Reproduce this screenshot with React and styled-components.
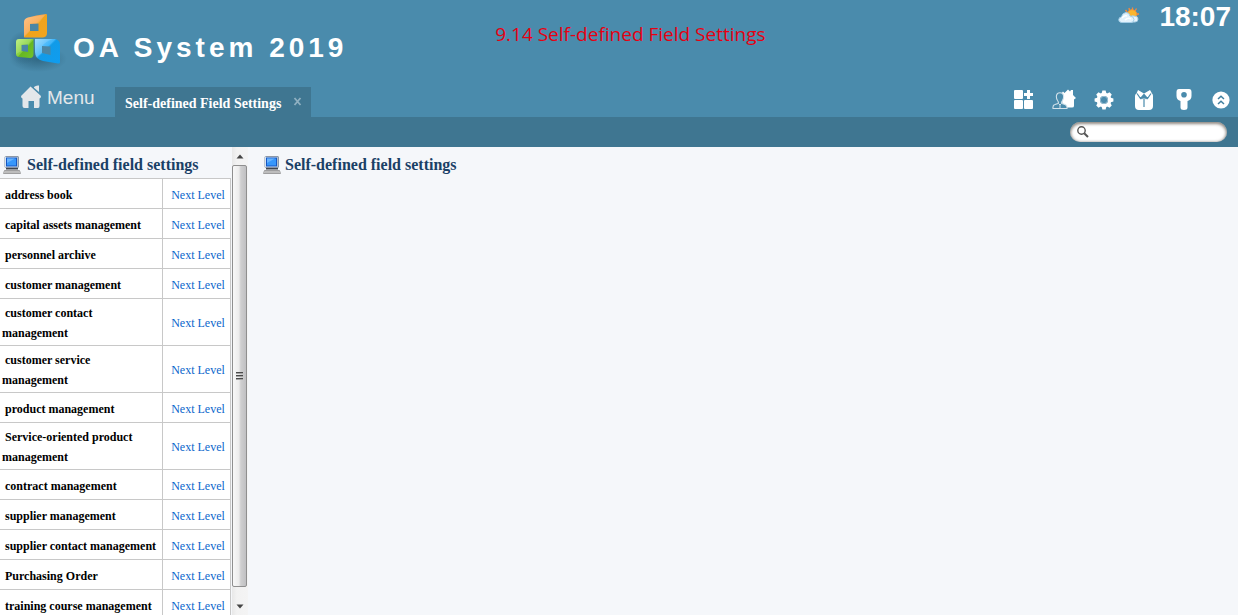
import React from "react";
import styled, { createGlobalStyle } from "styled-components";

const GlobalStyle = createGlobalStyle`
  * { box-sizing: border-box; }
  html, body, #root { height: 100%; }
  body {
    margin: 0;
    overflow: hidden;
    background: #f5f7fa;
    font-family: "Liberation Serif", "Times New Roman", serif;
  }
  button { border: 0; padding: 0; background: none; cursor: pointer; font: inherit; color: inherit; }
  svg { display: block; }
`;

const Page = styled.div`
  display: flex;
  flex-direction: column;
  height: 100vh;
`;

const Header = styled.header`
  background: #4a8bac;
  color: #fff;
`;

const TopRow = styled.div`
  display: grid;
  grid-template-columns: 40% 1fr auto;
  height: 80px;
`;

const Brand = styled.div`
  display: flex;
  padding: 8px 0 0 8px;
  gap: 5px;
`;

const BrandName = styled.h1`
  margin: 0;
  padding-top: 22px;
  font: bold 28px/36px "Liberation Sans", Arial, sans-serif;
  letter-spacing: 4px;
  white-space: nowrap;
`;

const Caption = styled.div`
  padding-top: 20px;
  color: #e60012;
  font: 19px/28px "Open Sans", "Noto Sans", sans-serif;
  white-space: nowrap;
`;

const Status = styled.div`
  display: flex;
  align-items: flex-start;
  gap: 20px;
  padding: 0 7px 0 0;
`;

const WeatherSlot = styled.div`
  padding-top: 7px;
`;

const Clock = styled.time`
  font: bold 28px/34px "Liberation Sans", Arial, sans-serif;
`;

const NavRow = styled.nav`
  display: flex;
  align-items: flex-end;
  height: 37px;
`;

const MenuButton = styled.button`
  display: flex;
  align-items: flex-end;
  gap: 5px;
  height: 37px;
  width: 115px;
  padding-left: 21px;
  padding-bottom: 8px;
  color: #e3e7ea;
  font: 19px/22px "Liberation Sans", Arial, sans-serif;
`;

const Tab = styled.div`
  display: flex;
  align-items: center;
  gap: 12px;
  height: 30px;
  padding: 3px 9px 0 10px;
  background: #3f7691;
`;

const TabLabel = styled.span`
  font-weight: bold;
  font-size: 14px;
  line-height: 20px;
  white-space: nowrap;
`;

const TabClose = styled.button`
  padding-bottom: 4px;
`;

const Tools = styled.div`
  display: flex;
  margin-left: auto;
`;

const Tool = styled.button`
  display: flex;
  align-items: center;
  justify-content: center;
  width: ${(p) => (p.$narrow ? 34 : 40)}px;
  height: 35px;
`;

const SubBar = styled.div`
  display: flex;
  align-items: center;
  justify-content: flex-end;
  height: 30px;
  padding-right: 11px;
  background: #3f7691;
`;

const SearchBox = styled.label`
  display: flex;
  align-items: center;
  width: 157px;
  height: 20px;
  padding-left: 7px;
  gap: 4px;
  border-radius: 10px;
  background: #fff;
  box-shadow: inset 0 1px 3px 1px rgba(70, 60, 50, 0.6);
`;

const SearchInput = styled.input`
  flex: 1;
  min-width: 0;
  height: 16px;
  border: 0;
  padding: 0 8px 0 0;
  outline: 0;
  background: transparent;
  font: 12px "Liberation Sans", Arial, sans-serif;
`;

const Body = styled.div`
  display: flex;
  flex: 1;
  min-height: 0;
`;

const Sidebar = styled.aside`
  display: flex;
  gap: 1px;
  width: 248px;
`;

const ListPane = styled.div`
  flex: 1;
  overflow: hidden;
`;

const Heading = styled.h2`
  display: flex;
  align-items: center;
  gap: ${(p) => (p.$main ? 4 : 6)}px;
  height: 31px;
  margin: 0;
  padding: 5px 0 0 ${(p) => (p.$main ? 15 : 3)}px;
  color: #1a4066;
  font-size: 16px;
  line-height: 20px;
  white-space: nowrap;
`;

const FieldTable = styled.table`
  width: 100%;
  border-collapse: separate;
  border-spacing: 0;
  border-top: 1px solid #c8c8c8;
  background: #fff;
  font-size: 12px;
  line-height: 20px;
`;

const NameCell = styled.th`
  height: 30px;
  padding: 4px 4px 2px 2px;
  border-right: 1px solid #c8c8c8;
  border-bottom: 1px solid #c8c8c8;
  color: #000;
  text-align: left;
  text-indent: 3px;
`;

const LinkCell = styled.td`
  width: 68px;
  padding: 4px 2px 2px 5px;
  border-right: 1px solid #c8c8c8;
  border-bottom: 1px solid #c8c8c8;
  text-align: center;
  white-space: nowrap;
`;

const NextLink = styled.a`
  color: #0a66cc;
  text-decoration: none;
`;

const ScrollRail = styled.div`
  display: flex;
  flex-direction: column;
  width: 16px;
  background: linear-gradient(90deg, #e8e8e8, #f2f2f2 30%, #f4f4f4);
`;

const ScrollArrow = styled.button`
  display: flex;
  align-items: center;
  justify-content: center;
  height: 18px;
`;

const ScrollThumb = styled.div`
  display: flex;
  flex: 1;
  flex-direction: column;
  align-items: center;
  justify-content: center;
  gap: 1px;
  margin-right: 1px;
  margin-bottom: 10px;
  border: 1px solid #8f8f8f;
  border-radius: 2px;
  background: linear-gradient(90deg, #f8f8f8, #ececec 45%, #cfcfd0 60%, #c0c0c2);
`;

const Grip = styled.span`
  width: 7px;
  height: 2px;
  border-top: 1px solid #4a4a4a;
  background: #a5a5a5;
`;

const Main = styled.main`
  flex: 1;
`;

const Logo = () => (
  <svg width="60" height="66" viewBox="8 8 60 66" aria-hidden="true">
    <defs>
      <linearGradient id="orange" x1="0" y1="0" x2="1" y2="1">
        <stop offset="0" stopColor="#ffb878" />
        <stop offset="0.45" stopColor="#f9a547" />
        <stop offset="0.5" stopColor="#f0a31c" />
        <stop offset="1" stopColor="#f2a51f" />
      </linearGradient>
      <linearGradient id="green" x1="0" y1="0" x2="1" y2="1">
        <stop offset="0" stopColor="#b5ee72" />
        <stop offset="0.5" stopColor="#84cf3c" />
        <stop offset="0.54" stopColor="#66b722" />
        <stop offset="1" stopColor="#72c32c" />
      </linearGradient>
      <linearGradient id="blue" x1="0" y1="0" x2="1" y2="1">
        <stop offset="0" stopColor="#8fd6ff" />
        <stop offset="0.4" stopColor="#3fb5fa" />
        <stop offset="0.45" stopColor="#119be8" />
        <stop offset="1" stopColor="#0f9df0" />
      </linearGradient>
      <radialGradient id="shade">
        <stop offset="0" stopColor="#24566f" stopOpacity="0.65" />
        <stop offset="1" stopColor="#24566f" stopOpacity="0" />
      </radialGradient>
    </defs>
    <ellipse cx="38" cy="59" rx="29" ry="13" fill="url(#shade)" />
    <ellipse cx="23" cy="48" rx="15" ry="17" fill="url(#shade)" />
    <path fill="#4a86a5" d="M29 22H40V32H29ZM21 44H29V53H21ZM41 45H51V56H41Z" />
    <path fill="url(#orange)" fillRule="evenodd" d="M24 37V22Q24 18.500 28 17.500Q36 15 46 14Q47 14 47 15V33Q47 37 43 37.500H25Q24 37.500 24 37ZM30 24V31H38.500V23.500Z" />
    <path fill="url(#green)" fillRule="evenodd" d="M16 42Q16 39 19 39H33.500V54Q33.500 58 30 58L19 57Q16 56.500 16 54ZM21.500 45V51L28 52V44.500Z" />
    <path fill="url(#blue)" fillRule="evenodd" d="M35 39H55Q60 40 60 45V62Q60 64 58 63.500L43 61Q35 59 35 52ZM42 46V53L50.500 55V46.500Z" />
    <path fill="#fff" opacity="0.14" d="M24 37V22Q24 18.500 28 17.500L45 15L38.500 23.500H30V31ZM16 54V42Q16 39 19 39H32L28 44.500H21.500V51ZM35 52V39H53Q46 41 42 46V53Q37 56 36 58Z" />
  </svg>
);

const Weather = () => (
  <svg width="21" height="17" viewBox="0 0 21 17" aria-hidden="true">
    <path d="M9 5L7.500 3M11.500 3.500L11 1M14.500 3V0.500M17 4L18.500 1.500M18.500 7H21M18 10L20 11" stroke="#f58a3a" strokeWidth="1.300" />
    <circle cx="14" cy="7.500" r="4.800" fill="#fbb62e" stroke="#f2933a" />
    <path d="M11 15Q9 12 12 10.500Q13 8 16 9Q20 9 20 12Q20 15 17 15Z" fill="#e7f3fb" stroke="#a9cee4" />
    <path d="M3.500 15.500Q0.500 15 0.800 12.500Q1 10 3.500 10Q4 6 8 5.500Q11.500 5.500 12 9Q16 9.500 16 12.500Q16 15.500 13 15.500Z" fill="#e2f2fc" stroke="#a3cde6" />
    <path d="M4 11Q6 8 9 9M7 13Q10 10 13 12" fill="none" stroke="#fff" strokeWidth="1.500" />
  </svg>
);

const Home = () => (
  <svg width="21" height="24" viewBox="0 0 21 24" fill="#e3e7ea" aria-hidden="true">
    <path d="M13 2Q15 0 18 0.500V7L13 2.800Z" />
    <path d="M9.500 1.500L20 11Q20 13 18.500 13.500V21Q18.500 23 17 23H13V16H7.500V23H3.500Q1.500 23 1.500 21V13.500Q0 13 0 11Z" />
  </svg>
);

const CloseIcon = () => (
  <svg width="9" height="9" viewBox="0 0 9 9" aria-hidden="true">
    <path d="M1.500 1L7.500 8M7.500 1L1.500 8" stroke="#8fb0c1" strokeWidth="1.800" />
  </svg>
);

const TilesIcon = () => (
  <svg width="20" height="20" viewBox="0 0 20 20" fill="#fff" aria-hidden="true">
    <rect x="0" y="0" width="9" height="9" rx="1" />
    <rect x="0" y="10" width="9" height="9" rx="1" />
    <rect x="10" y="10" width="9" height="9" rx="1" />
    <path d="M13 0H16V3H19V6H16V9H13V6H10V3H13Z" />
  </svg>
);

const PeopleHomeIcon = () => (
  <svg width="24" height="21" viewBox="0 0 24 21" aria-hidden="true">
    <path fill="#fff" d="M9 5L11 2.500L12.500 4L16 0.500L18 2.500L19 1H21V6L24 9L22 10.500V17Q22 18.500 20 18.500H11Z" />
    <path
      fill="#4a8bac"
      stroke="#d4e3eb"
      strokeWidth="1.100"
      d="M1 19.500Q0.500 16 3 15.500L6 14.500Q7 13.500 5.500 11.500Q4 9 4.500 6.500Q5 3.800 8 3.800Q11 3.800 11.500 6.500Q12 9 10.500 11.500Q9 13.500 10 14.500L13 15.500Q15.500 16.500 15 19.500Z"
    />
    <path d="M6.500 14.500L8 16L9.500 14.500M8 15V19" fill="none" stroke="#d4e3eb" />
  </svg>
);

const GearIcon = () => (
  <svg width="20" height="20" viewBox="-10 -10 20 20" aria-hidden="true">
    {[0, 45, 90, 135, 180, 225, 270, 315].map((a) => (
      <path key={a} transform={`rotate(${a})`} fill="#fff" d="M-2.600 -6L-1.600 -9.400H1.600L2.600 -6Z" />
    ))}
    <circle r="5.700" fill="none" stroke="#fff" strokeWidth="3.200" />
    <circle r="3.700" fill="none" stroke="#a7c8d9" strokeWidth="0.800" />
  </svg>
);

const SuitIcon = () => (
  <svg width="18" height="20" viewBox="0 0 18 20" aria-hidden="true">
    <path fill="#fff" d="M3 0L9 3.500L15 0L17 3.500Q18 4 18 6V16Q18 20 14 20H4Q0 20 0 16V6Q0 4 1.500 3.500Z" />
    <path d="M2 3.500L5.500 8.500L9 4.500L12.500 8.500L16 3.500M9 4.500V17M6.500 9L9 6L11.500 9" fill="none" stroke="#4a8bac" strokeWidth="1.200" />
    <path fill="#4a8bac" d="M4.500 0L9 3L13.500 0Z" />
  </svg>
);

const KeyIcon = () => (
  <svg width="16" height="21" viewBox="0 0 16 21" aria-hidden="true">
    <path fill="#fff" fillRule="evenodd" d="M3 0H13Q15.500 0 15.500 3V7Q15.500 11 11.500 12V18.500Q11.500 21 8 21Q4.500 21 4.500 18.500V12Q0.500 11 0.500 7V3Q0.500 0 3 0ZM8 3A2.800 2.800 0 1 0 8 8.600A2.800 2.800 0 1 0 8 3Z" />
  </svg>
);

const CollapseIcon = () => (
  <svg width="18" height="18" viewBox="0 0 18 18" aria-hidden="true">
    <circle cx="9" cy="9" r="8.600" fill="#fff" />
    <path d="M6 8L9 5.200L12 8M6 13L9 10.200L12 13" fill="none" stroke="#3f7f9f" strokeWidth="1.500" />
  </svg>
);

const SearchIcon = () => (
  <svg width="12" height="12" viewBox="0 0 12 12" fill="none" stroke="#555" aria-hidden="true">
    <circle cx="4.500" cy="4.500" r="3.700" strokeWidth="1.400" />
    <path d="M7.200 7.200L11 11" strokeWidth="2" />
  </svg>
);

const Computer = () => (
  <svg width="18" height="18" viewBox="0 0 18 18" aria-hidden="true">
    <path fill="#8c98a8" d="M3 0H15L16 1V11L15 12H3L1.500 11V1Z" />
    <rect x="2" y="1" width="12.500" height="10" fill="#d6e3ef" />
    <rect x="3" y="1.500" width="11" height="9" fill="#1557c4" />
    <path fill="#3797fb" d="M4 2.500H13V9.500H4Z" />
    <path fill="#68b3ff" d="M4 2.500H12L4 7Z" />
    <path fill="#3f454f" d="M3 12H15V13.500H3Z" />
    <path fill="#d5d5d5" stroke="#8b8b8b" strokeWidth="0.800" d="M1.500 14.500H16.500L17.500 17.500H0.500Z" />
    <path stroke="#777" strokeDasharray="1 1" d="M2.500 16H16" />
  </svg>
);

const Arrow = ({ down }) => (
  <svg width="8" height="5" viewBox="0 0 8 5" aria-hidden="true">
    <path fill="#444" d={down ? "M0.500 0.500H7.500L4 4.500Z" : "M0.500 4.500H7.500L4 0.500Z"} />
  </svg>
);

const tools = [
  ["Add module", TilesIcon],
  ["Personal home", PeopleHomeIcon],
  ["Settings", GearIcon],
  ["Theme", SuitIcon],
  ["Password", KeyIcon],
  ["Collapse", CollapseIcon],
];

const fields = [
  "address book",
  "capital assets management",
  "personnel archive",
  "customer management",
  "customer contact management",
  "customer service management",
  "product management",
  "Service-oriented product management",
  "contract management",
  "supplier management",
  "supplier contact management",
  "Purchasing Order",
  "training course management",
];

export default function App() {
  return (
    <Page>
      <GlobalStyle />
      <Header>
        <TopRow>
          <Brand>
            <Logo />
            <BrandName>OA System 2019</BrandName>
          </Brand>
          <Caption>9.14 Self-defined Field Settings</Caption>
          <Status>
            <WeatherSlot>
              <Weather />
            </WeatherSlot>
            <Clock>18:07</Clock>
          </Status>
        </TopRow>
        <NavRow>
          <MenuButton type="button">
            <Home />
            Menu
          </MenuButton>
          <Tab>
            <TabLabel>Self-defined Field Settings</TabLabel>
            <TabClose type="button" aria-label="Close tab">
              <CloseIcon />
            </TabClose>
          </Tab>
          <Tools>
            {tools.map(([label, Icon], i) => (
              <Tool key={label} type="button" aria-label={label} $narrow={i === tools.length - 1}>
                <Icon />
              </Tool>
            ))}
          </Tools>
        </NavRow>
        <SubBar>
          <SearchBox>
            <SearchIcon />
            <SearchInput type="text" aria-label="Search" />
          </SearchBox>
        </SubBar>
      </Header>
      <Body>
        <Sidebar>
          <ListPane>
            <Heading>
              <Computer />
              Self-defined field settings
            </Heading>
            <FieldTable>
              <tbody>
                {fields.map((name) => (
                  <tr key={name}>
                    <NameCell scope="row">{name}</NameCell>
                    <LinkCell>
                      <NextLink href="#next">Next Level</NextLink>
                    </LinkCell>
                  </tr>
                ))}
              </tbody>
            </FieldTable>
          </ListPane>
          <ScrollRail>
            <ScrollArrow type="button" aria-label="Scroll up">
              <Arrow />
            </ScrollArrow>
            <ScrollThumb>
              <Grip />
              <Grip />
              <Grip />
            </ScrollThumb>
            <ScrollArrow type="button" aria-label="Scroll down">
              <Arrow down />
            </ScrollArrow>
          </ScrollRail>
        </Sidebar>
        <Main>
          <Heading $main>
            <Computer />
            Self-defined field settings
          </Heading>
        </Main>
      </Body>
    </Page>
  );
}
